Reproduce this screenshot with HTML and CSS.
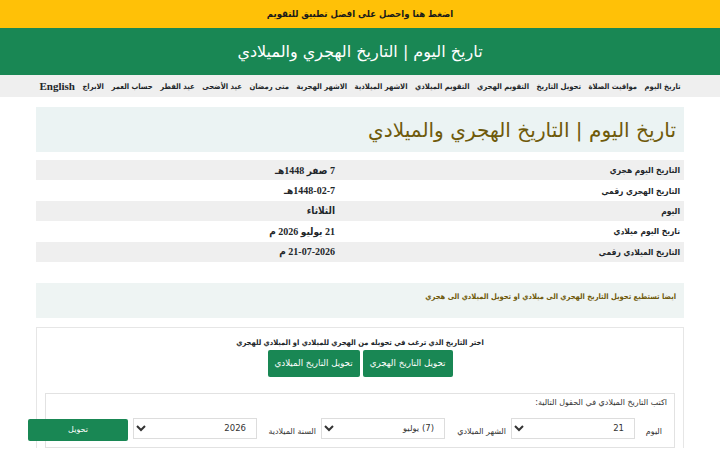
FILE: index.html
```html
<!DOCTYPE html>
<html lang="ar" dir="rtl">
<head>
    <meta charset="UTF-8">
    <meta name="viewport" content="width=device-width, initial-scale=1.0">
    <title>تاريخ اليوم | التاريخ الهجري والميلادي</title>
    <link rel="stylesheet" href="styles.css">
</head>
<body>
    <a class="promo" href="#">اضغط هنا واحصل على افضل تطبيق للتقويم</a>

    <header class="site-header">
        <h1>تاريخ اليوم | التاريخ الهجري والميلادي</h1>
    </header>

    <nav class="menu">
        <a href="#">تاريخ اليوم</a>
        <a href="#">مواقيت الصلاة</a>
        <a href="#">تحويل التاريخ</a>
        <a href="#">التقويم الهجري</a>
        <a href="#">التقويم الميلادي</a>
        <a href="#">الاشهر الميلادية</a>
        <a href="#">الاشهر الهجرية</a>
        <a href="#">متى رمضان</a>
        <a href="#">عيد الأضحى</a>
        <a href="#">عيد الفطر</a>
        <a href="#">حساب العمر</a>
        <a href="#">الابراج</a>
        <a href="#" class="lang" lang="en">English</a>
    </nav>

    <div class="container">
        <div class="page-title">
            <h2>تاريخ اليوم | التاريخ الهجري والميلادي</h2>
        </div>

        <table class="dates">
            <tr><td>التاريخ اليوم هجري</td><th>7 صفر 1448هـ</th></tr>
            <tr><td>التاريخ الهجري رقمي</td><th>1448-02-7هـ</th></tr>
            <tr><td>اليوم</td><th>الثلاثاء</th></tr>
            <tr><td>تاريخ اليوم ميلادي</td><th>21 يوليو 2026 م</th></tr>
            <tr><td>التاريخ الميلادي رقمي</td><th>21-07-2026 م</th></tr>
        </table>

        <div class="note">ايضا تستطيع تحويل التاريخ الهجري الى ميلادي او تحويل الميلادي الى هجري</div>

        <div class="converter">
            <p class="pick">اختر التاريخ الذي ترغب في تحويله من الهجري للميلادي او الميلادي للهجري</p>
            <div class="switch">
                <button type="button" class="btn">تحويل التاريخ الهجري</button>
                <button type="button" class="btn">تحويل التاريخ الميلادي</button>
            </div>

            <form class="fields">
                <p>اكتب التاريخ الميلادي في الحقول التالية:</p>
                <div class="field-row">
                    <label for="day" class="first">اليوم</label>
                    <select id="day"><option>21</option></select>
                    <label for="month">الشهر الميلادي</label>
                    <select id="month"><option>(7) يوليو</option></select>
                    <label for="year" class="narrow">السنة الميلادية</label>
                    <select id="year"><option>2026</option></select>
                    <button type="button" class="btn go">تحويل</button>
                </div>
            </form>
        </div>
    </div>
</body>
</html>
```

FILE: styles.css
```css
body {
    margin: 0;
    font-family: "Liberation Serif", "DejaVu Sans Condensed", "DejaVu Sans", serif;
    font-size: 10px;
    color: #212529;
    background: #fff;
}
a {
    color: inherit;
    text-decoration: none;
}
.promo {
    display: block;
    height: 28px;
    line-height: 28px;
    background-color: #ffc107;
    text-align: center;
    font-family: "DejaVu Sans Condensed", "DejaVu Sans", sans-serif;
    font-weight: bold;
    font-size: 9.5px;
    color: #1a1a1a;
}
.site-header {
    background-color: #198754;
    height: 47px;
    display: flex;
    align-items: center;
    justify-content: center;
}
.site-header h1 {
    margin: 0;
    color: #fff;
    font-family: "DejaVu Sans", sans-serif;
    font-weight: normal;
    font-size: 16px;
}
.menu {
    height: 22px;
    background-color: #efefef;
    display: flex;
    align-items: center;
    justify-content: center;
    gap: 7.5px;
    white-space: nowrap;
    font-family: "DejaVu Sans Condensed", "DejaVu Sans", sans-serif;
    font-weight: bold;
    font-size: 7.6px;
}
.menu .lang {
    font-family: "Liberation Serif", serif;
    font-size: 11px;
}
.container {
    width: 648px;
    margin: 10px auto 0;
}
.page-title {
    background-color: #ebf3f3;
    height: 45px;
    display: flex;
    align-items: center;
    padding: 0 8px;
}
.page-title h2 {
    margin: 0;
    font-family: "DejaVu Sans", sans-serif;
    font-weight: normal;
    font-size: 20.1px;
    color: #6f5a0a;
}
.dates {
    width: 100%;
    border-collapse: collapse;
    margin-top: 8px;
}
.dates tr {
    height: 20.4px;
}
.dates tr:nth-child(odd) {
    background-color: #efefef;
}
.dates td {
    width: 337px;
    padding: 0 4px;
    text-align: right;
    font-family: "DejaVu Sans Condensed", "DejaVu Sans", sans-serif;
    font-weight: bold;
    font-size: 8.4px;
}
.dates th {
    padding: 0 4px;
    text-align: right;
    font-weight: bold;
}
.note {
    margin-top: 21px;
    background-color: #eef4f3;
    height: 35px;
    line-height: 28px;
    padding: 0 8px;
    color: #6f5a0a;
    font-family: "DejaVu Sans Condensed", "DejaVu Sans", sans-serif;
    font-weight: bold;
    font-size: 7.5px;
}
.converter {
    margin-top: 9px;
    border: 1px solid #e6e6e6;
    border-bottom: none;
    padding: 8px 8px 0;
    text-align: center;
}
.pick {
    margin: 0;
    font-family: "DejaVu Sans Condensed", "DejaVu Sans", sans-serif;
    font-weight: bold;
    font-size: 7.5px;
    line-height: 14px;
}
.switch {
    display: flex;
    justify-content: center;
    gap: 3px;
}
.btn {
    background-color: #198754;
    color: #fff;
    border: none;
    border-radius: 2px;
    font-family: "DejaVu Sans", sans-serif;
    font-size: 8.7px;
    height: 27px;
    padding: 0 7px;
}
.fields {
    margin-top: 16px;
    border: 1px solid #e2e2e2;
    padding: 0 7px 6px;
    text-align: right;
    font-family: "DejaVu Sans", sans-serif;
    font-size: 8px;
    color: #333;
}
.fields p {
    margin: 0;
    line-height: 18px;
}
.field-row {
    display: flex;
    align-items: center;
    margin-top: 4px;
    white-space: nowrap;
}
.field-row > * {
    flex-shrink: 0;
}
.field-row label {
    width: 61px;
    padding: 6px 5px 0 0;
}
.field-row label.first {
    width: 27px;
}
.field-row label.narrow {
    width: 59px;
}
.field-row select {
    width: 124px;
    height: 21px;
    border: 1px solid #ddd;
    background: #fff;
    font-family: "DejaVu Sans", sans-serif;
    font-size: 8.5px;
    color: #333;
    padding: 0 6px;
}
.field-row .go {
    width: 100px;
    height: 22px;
    margin: 3px 5px 0 0;
    font-size: 8px;
}
```
